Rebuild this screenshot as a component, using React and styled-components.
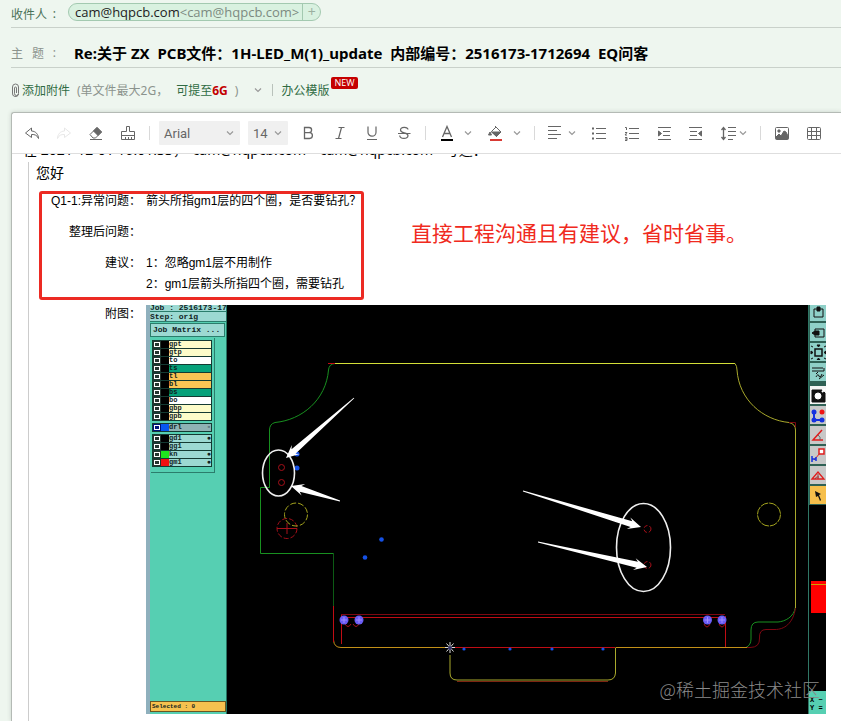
import React, { useState } from 'react';
import styled, { createGlobalStyle } from 'styled-components';

const GlobalStyle = createGlobalStyle`
    * {
        box-sizing: border-box;
    }
    body {
        margin: 0;
        background: #eef6ef;
        font-family: "Noto Sans", "Noto Sans CJK SC", sans-serif;
        font-size: 12px;
        color: #000;
        overflow: hidden;
    }
    button {
        font: inherit;
        color: inherit;
        border: 0;
        padding: 0;
        background: none;
        cursor: pointer;
    }
`;

const Page = styled.div`
    display: flex;
    flex-direction: column;
    height: 100vh;
    padding-left: 11px;
`;

const HeaderRow = styled.div`
    display: flex;
    align-items: center;
    flex-shrink: 0;
    height: ${props => props.$height}px;
    padding-top: ${props => props.$top || 0}px;
    border-bottom: 1px solid #c9d1ca;
    white-space: nowrap;
`;

const RowLabel = styled.label`
    display: flex;
    justify-content: space-between;
    width: 45px;
    margin-right: ${props => props.$space}px;
    color: ${props => props.$color};
`;

const Chip = styled.div`
    display: flex;
    align-items: center;
    height: 18px;
    margin-bottom: 3px;
    border: 1px solid #a3c9b0;
    border-radius: 9px;
    background: #d9f1e0;
    overflow: hidden;
    font-family: "Open Sans", sans-serif;
    font-size: 13px;
    line-height: 16px;
    padding-left: 6px;
    color: #222;
`;

const Address = styled.span`
    color: #7c8a80;
`;

const ChipAdd = styled.button`
    width: 18px;
    height: 18px;
    margin-left: 3px;
    border-left: 1px solid #a3c9b0;
    color: #9aaf9f;
    font-size: 14px;
    line-height: 14px;
`;

const SubjectInput = styled.input`
    flex: 1;
    border: 0;
    outline: 0;
    padding: 0;
    background: none;
    color: #000;
    font-family: "Noto Sans", "Noto Sans CJK SC", sans-serif;
    font-size: 15px;
    font-weight: bold;
    white-space: pre;
`;

const AttachRow = styled.div`
    display: flex;
    align-items: center;
    flex-shrink: 0;
    height: 44px;
    color: #8b938d;
    white-space: nowrap;
`;

const GreenLink = styled.a`
    color: #2f6b43;
    text-decoration: none;
    margin-left: ${props => props.$space || 0}px;
`;

const Hint = styled.span`
    margin: 0 8px 0 7px;
`;

const Limit = styled.b`
    color: #c30000;
`;

const MoreButton = styled.button`
    display: flex;
    margin-left: 8px;
`;

const Bar = styled.span`
    width: 1px;
    height: 12px;
    margin-left: 10px;
    background: #b9c2bb;
`;

const NewBadge = styled.span`
    align-self: flex-start;
    margin: 9px 0 0 2px;
    padding: 0 3px;
    border-radius: 2px;
    background: #c50000;
    color: #fff;
    font-family: "Open Sans", sans-serif;
    font-size: 9px;
    line-height: 12px;
`;

const Editor = styled.main`
    flex: 1;
    display: flex;
    flex-direction: column;
    min-height: 0;
    border: 1px solid #b4bab5;
    border-right: 0;
    border-bottom: 0;
    border-radius: 3px 0 0 0;
    background: #fff;
    box-shadow: 0 0 4px #c8d0c9;
`;

const Toolbar = styled.div`
    display: flex;
    align-items: center;
    flex-shrink: 0;
    height: 41px;
    padding-left: 4px;
    border-bottom: 1px solid #dedede;
    color: #666;
`;

const ToolButton = styled.button`
    display: flex;
    align-items: center;
    justify-content: center;
    gap: ${props => props.$gap || 0}px;
    flex-shrink: 0;
    height: 32px;
    padding: 0 8px;
    opacity: ${props => (props.disabled ? 0.15 : 1)};
`;

const Separator = styled.span`
    flex-shrink: 0;
    width: 1px;
    height: 14px;
    margin: 0 ${props => props.$right || 5}px 0 5px;
    background: #d9d9d9;
`;

const SelectBox = styled.div`
    display: grid;
    grid-template-columns: 1fr 14px;
    align-items: center;
    flex-shrink: 0;
    width: ${props => props.$width}px;
    height: 24px;
    margin-right: ${props => props.$right}px;
    background: #f0f0f0;
    border-radius: 1px;

    select {
        grid-area: 1 / 1 / 2 / 3;
        width: 100%;
        height: 24px;
        padding: 0 0 0 5px;
        border: 0;
        background: none;
        appearance: none;
        color: #666;
        font-family: Roboto, sans-serif;
        font-size: 13px;
    }

    svg {
        grid-area: 1 / 2;
        pointer-events: none;
    }
`;

const MailBody = styled.div`
    flex: 1;
    display: flex;
    flex-direction: column;
    min-height: 0;
    overflow: hidden;
`;

const QuoteIntro = styled.div`
    display: flex;
    align-items: flex-end;
    flex-shrink: 0;
    height: 8px;
    padding: 0 0 3px 11px;
    overflow: hidden;
    font-size: 14px;
    line-height: 18px;
    white-space: pre;
`;

const Quote = styled.blockquote`
    flex: 1;
    margin: 0 0 0 16px;
    border-left: 1px solid #ccc;
    font-family: "Liberation Sans", "Noto Sans CJK SC", sans-serif;
`;

const Greeting = styled.p`
    margin: 0;
    padding-left: 7px;
    font-size: 14px;
    line-height: 22px;
`;

const ReplyRow = styled.div`
    display: flex;
    align-items: flex-start;
    margin: 7px 0 0 10px;
`;

const Questions = styled.dl`
    display: grid;
    grid-template-columns: 99px 1fr;
    grid-template-rows: 31px 31px 21px 20px;
    column-gap: 5px;
    flex-shrink: 0;
    width: 325px;
    margin: 0;
    border: 3px solid #ec2a23;
    border-radius: 3px;
    line-height: 14px;

    dt {
        text-align: right;
        white-space: nowrap;
    }

    dd {
        margin: 0;
        grid-column: 2;
        white-space: nowrap;
    }
`;

const Remark = styled.p`
    margin: 27px 0 0 47px;
    color: #f02a20;
    font-size: 21px;
    line-height: 32px;
    white-space: nowrap;
`;

const FigureRow = styled.div`
    display: grid;
    grid-template-columns: 112px 1fr;
    column-gap: 5px;
    margin: 5px 15px 0 0;
    line-height: 18px;
    text-align: right;
`;

const Screen = styled.figure`
    position: relative;
    display: grid;
    grid-template-columns: 81px 1fr 18px;
    height: 409px;
    margin: 0;
    background: #000;
    overflow: hidden;
    text-align: left;
`;

const SidePanel = styled.div`
    display: flex;
    flex-direction: column;
    min-height: 0;
    border-left: 4px solid #8fb0bd;
    border-right: 1px solid #267361;
    background: #56cfb2;
    font-family: "Liberation Mono", monospace;
    font-weight: bold;
    color: #10231f;
`;

const PanelLine = styled.div`
    flex-shrink: 0;
    height: ${props => props.$height}px;
    border-bottom: 1px solid #2b7d6c;
    background: #9cd9d2;
    overflow: hidden;
    font-size: 8px;
    line-height: ${props => props.$line}px;
    white-space: pre;
`;

const MatrixButton = styled.button`
    flex-shrink: 0;
    height: 14px;
    margin: 1px 1px 0 0;
    padding-left: 2px;
    border: 1px solid #2b7d6c;
    background: #9cd9d2;
    font-size: 8px;
    line-height: 12px;
    text-align: left;
    white-space: pre;
`;

const LayerFrame = styled.div`
    margin: 1px 11px 0 1px;
    padding: 2px 2px 3px 1px;
    border: solid #2b7d6c;
    border-width: 0 1px 1px 0;
`;

const LayerGroup = styled.ul`
    margin: 0 0 2px;
    padding: 0;
    list-style: none;
    border: 1px solid #143a32;
    border-bottom-width: 0;
`;

const Layer = styled.li`
    display: grid;
    grid-template-columns: 8px 8px 1fr auto;
    height: 8px;
    border-bottom: 1px solid #143a32;
    background: ${props => props.$color};
    font-size: 7px;
    line-height: 6px;
    overflow: hidden;

    input {
        appearance: none;
        width: 8px;
        height: 7px;
        margin: 0;
        border: 1px solid ${props => props.$frame || '#25352f'};
        background: ${props => props.$frame || '#25352f'};
        box-shadow: inset 0 0 0 1px #fff;
    }
`;

const Swatch = styled.span`
    background: ${props => props.$color};
`;

const Selected = styled.div`
    height: 11px;
    margin: auto 0 2px;
    padding-left: 1px;
    border: 1px solid #6b5620;
    background: #f6c14f;
    font-size: 6px;
    line-height: 9px;
    white-space: pre;
`;

const Board = styled.svg`
    display: block;
    width: 100%;
    height: 409px;
`;

const ToolStrip = styled.div`
    display: flex;
    flex-direction: column;
    height: 409px;
    border-left: 1px solid #2f7665;
`;

const ToolGroup = styled.div`
    flex-shrink: 0;
    height: ${props => props.$height}px;
    display: flex;
    flex-direction: column;
    justify-content: flex-end;
    background: #2f6155;
    overflow: hidden;
`;

const CadTool = styled.button`
    flex-shrink: 0;
    height: 18px;
    margin: 1px 0 1px 1px;
    background: ${props => props.$color};

    svg {
        display: block;
    }
`;

const Zoomed = styled.div`
    height: 32px;
    margin: 76px 0 0 2px;
    padding-top: 3px;
    background: #f00;

    &::before {
        content: "";
        display: block;
        height: 1px;
        background: #d0a000;
    }
`;

const Coords = styled.div`
    margin-top: auto;
    height: 23px;
    background: #56cfb2;
    font-family: "Liberation Mono", monospace;
    font-size: 7px;
    font-weight: bold;
    line-height: 8px;
    padding: 5px 0 0 1px;
    white-space: pre;
`;

const Watermark = styled.figcaption`
    position: absolute;
    right: 6px;
    bottom: 13px;
    color: #8a8a8a;
    font-family: "Noto Sans CJK SC", sans-serif;
    font-size: 18px;
    font-weight: 300;
    line-height: 24px;
    white-space: nowrap;
`;

const layers = [
    { name: 'gpt', color: '#fdfcc9' },
    { name: 'gtp', color: '#fdfcc9' },
    { name: 'to', color: '#fff' },
    { name: 'ts', color: '#06a17a' },
    { name: 'tl', color: '#fac454' },
    { name: 'bl', color: '#fac454' },
    { name: 'bs', color: '#06a17a' },
    { name: 'bo', color: '#fff' },
    { name: 'gbp', color: '#fdfcc9' },
    { name: 'gpb', color: '#fdfcc9' },
];

const drills = [{ name: 'drl', color: '#8fb2b4', swatch: '#0757f0', frame: '#00147a', mark: '▫' }];

const extras = [
    { name: 'gd1', color: '#9cd9d2', mark: '●' },
    { name: 'gg1', color: '#9cd9d2' },
    { name: 'kn', color: '#9cd9d2', swatch: '#1ee81e', mark: '●' },
    { name: 'gm1', color: '#9cd9d2', swatch: '#f31010', mark: '●' },
];

function Icon({ children, size = 16, ...rest }) {
    return (
        <svg width={size} height={size} viewBox={`0 0 ${size} ${size}`} fill="none" stroke="currentColor" {...rest}>
            {children}
        </svg>
    );
}

function Chevron() {
    return <Icon size={8}><path d="M1 2.500 4 5.500l3-3" stroke="#999" strokeWidth="1.200" /></Icon>;
}

function LayerList({ items }) {
    return (
        <LayerGroup>
            {items.map(item => (
                <Layer key={item.name} $color={item.color} $frame={item.frame}>
                    <input type="checkbox" aria-label={item.name} />
                    <Swatch $color={item.swatch || '#000'} />
                    <span>{item.name}</span>
                    <span>{item.mark}</span>
                </Layer>
            ))}
        </LayerGroup>
    );
}

// Tapered arrow: thin at the tail, widening up to the head
function Arrow({ from, to, width = 3 }) {
    const length = Math.hypot(to[0] - from[0], to[1] - from[1]);
    const ux = (to[0] - from[0]) / length;
    const uy = (to[1] - from[1]) / length;
    const at = (along, side) => `${from[0] + ux * along - uy * side},${from[1] + uy * along + ux * side}`;
    const points = [
        at(0, 0.4), at(length - 10, width), at(length - 13, 6), at(length, 0),
        at(length - 13, -6), at(length - 10, -width), at(0, -0.4),
    ];
    return <polygon points={points.join(' ')} fill="#fff" />;
}

function BoardDrawing() {
    return (
        <Board viewBox="227 305 581 409" fill="none" role="img" aria-label="PCB">
            <g stroke="#189020">
                <path d="M335 363.5Q329 364 328.500 370C326 400 302 420 275 422.500Q269.500 424 269.500 430V487.500H260.500V553.500H333.500" />
                <path d="M333.500 553V606" stroke="#0c5b14" />
                <path d="M795.500 607C794 617 785 621.500 778 622H758Q751 622 751 630V639Q751 645 746 647.500" />
            </g>
            <g stroke="#a9a92c">
                <path d="M335 363.500H735" stroke="#d4df38" />
                <path d="M735 363.500Q737 366 737 370C739 400 763 420 789 422.500Q795.500 424 795.500 430V608" />
                <path d="M333.500 640Q334 647.500 341 647.500H450M615.500 647.500H747" stroke="#c39018" />
                <path d="M450 655V673Q450 680 457 680H608Q615 680 615.500 673V648" />
            </g>
            <g stroke="#c00d14">
                <path d="M328 363.500H335M333.500 606V642M450 647.500H615M341.500 617.500H725M341.500 614V644M725.500 616V647" />
                <path d="M341 614.500H725M795.500 608C793 624 784 629.500 775 629.500H766Q759 629.500 759.500 638Q760 647.500 750 647.500H747M789 422.500H795.500V427" stroke="#7d0812" />
                <path d="M457 681.500H608" stroke="#7d2512" />
            </g>
            <g stroke="#a6101a">
                <circle cx="281.500" cy="467.500" r="3" />
                <circle cx="281.500" cy="482.500" r="3" />
                <circle cx="647.500" cy="529" r="3.500" strokeDasharray="4 2" />
                <circle cx="647.500" cy="565" r="3.500" strokeDasharray="4 2" />
                <circle cx="287" cy="528.500" r="10" strokeDasharray="5 2" />
                <path d="M277 528.500H297M287 523V534M345 624q3 5 6 0M353 624q3 5 6 0M704 624q3 6 6 0M719 624q3 6 6 0" />
            </g>
            <g stroke="#a4a41e">
                <circle cx="296" cy="514.500" r="11.500" strokeDasharray="6 2" />
                <circle cx="769" cy="514.500" r="11.500" strokeDasharray="8 1" />
            </g>
            <g fill="#1551e6">
                <circle cx="297" cy="454" r="2.500" />
                <circle cx="297" cy="468" r="2.500" />
                <circle cx="381.500" cy="539.500" r="2.300" />
                <circle cx="365" cy="557.500" r="2.300" />
                {[464, 510, 552, 603].map(x => <circle key={x} cx={x} cy="649" r="1.600" />)}
            </g>
            {[344, 359, 707.5, 722].map(x => (
                <g key={x}>
                    <circle cx={x} cy="620" r="4.500" fill="#6a5cf5" />
                    <path d={`M${x - 3} 620h6M${x} 617v6`} stroke="#a08cff" />
                </g>
            ))}
            <path d="M445 647.500h10M450 642v11M446.500 643.500l7 8M453.500 643.500l-7 8" stroke="#ddd" />
            <circle cx="450" cy="648" r="2" fill="#35356a" />
            <g stroke="#eee" strokeWidth="1.600">
                <ellipse cx="278.500" cy="473" rx="16" ry="23" />
                <ellipse cx="643.500" cy="547.500" rx="27" ry="44" />
            </g>
            <Arrow from={[354, 398]} to={[286, 458]} />
            <Arrow from={[340, 501]} to={[291, 486]} />
            <Arrow from={[523, 491]} to={[641, 527]} />
            <Arrow from={[538, 542]} to={[647, 567]} />
        </Board>
    );
}

const teal = '#8fd0c8';
const grey = '#c8c8c8';

const viewTools = [
    { name: 'Paste view', color: teal, art: <><path d="M4 5h9v8H4z" /><path d="M7 7V3h3v4z" fill="#111" /></> },
    { name: 'Previous view', color: teal, art: <><path d="M5 5h9v8H5z" /><path d="M2 9l3-2h4v4H5z" fill="#111" /></> },
    { name: 'Fit view', color: teal, art: <><path d="M5 5h7v7H5z" strokeWidth="1.500" /><path d="M7 1h3l-1.500 2zM7 16h3l-1.500-2zM1 7v3l2-1.500zM16 7v3l-2-1.500zM1 2l2 1M16 2l-2 1M1 15l2-1M16 15l-2-1" fill="#111" /></> },
    { name: 'Setup', color: teal, art: <path d="M2 4h11M2 7h12V4M8 8l-2 2M6 13q2-4 3-1t3-2M9 15l5-4" /> },
];

const editTools = [
    { name: 'Area', color: '#f5f5f5', art: <><path d="M2 3h10l3 3v9H2z" fill="#111" /><circle cx="8" cy="9" r="3" fill="#fff" stroke="#fff" /><path d="M12 5l3-3" stroke="#fff" strokeWidth="2" /></> },
    { name: 'Nets', color: grey, art: <><path d="M4 5v8h8" stroke="#1430e0" strokeWidth="2" /><g fill="#1430e0" stroke="none"><circle cx="4" cy="5" r="2.500" /><circle cx="4" cy="13" r="2.500" /><circle cx="12" cy="13" r="2.500" /></g><circle cx="12" cy="5" r="2.500" fill="#f01414" stroke="none" /></> },
    { name: 'Angle', color: grey, art: <><path d="M12 3L3 13h10" stroke="#e01c1c" strokeWidth="1.500" /><path d="M8 8q3 2 2 5" stroke="#666" /></> },
    { name: 'Distance', color: grey, art: <><path d="M4 13L11 5" stroke="#e01c1c" /><path d="M9 2h5v5H9z" stroke="#e01c1c" fill="#fff" strokeWidth="1.500" /><path d="M2 9v6M6 10v4M2 12h4" stroke="#1430e0" strokeWidth="1.500" /></> },
    { name: 'Triangle', color: grey, art: <><path d="M2 12l6-7 6 7z" stroke="#e01c1c" strokeWidth="1.300" /><path d="M8 7v5M5 12q1-3 4-2" stroke="#a33" /></> },
    { name: 'Select', color: '#f6bf4c', art: <path d="M5 4l6 3-2 1 2 5-1 1-2-5-2 1z" fill="#111" stroke="none" /> },
];

function CadTools({ tools }) {
    return tools.map(tool => (
        <CadTool key={tool.name} $color={tool.color} aria-label={tool.name}>
            <Icon size={16} stroke="#111">{tool.art}</Icon>
        </CadTool>
    ));
}

function EditorToolbar() {
    return (
        <Toolbar>
            <ToolButton aria-label="撤销">
                <Icon><path d="M7.500 3 1.500 8l6 4.500v-3C11 9.300 13 10.300 14.500 13.500 14.300 9.500 12 6.200 7.500 6z" /></Icon>
            </ToolButton>
            <ToolButton aria-label="重做" disabled>
                <Icon><path d="M8.500 3l6 5-6 4.500v-3C5 9.300 3 10.300 1.500 13.500 1.700 9.500 4 6.200 8.500 6z" /></Icon>
            </ToolButton>
            <ToolButton aria-label="清除格式">
                <Icon><path d="M2 9.500 9 2.500l4.500 4.500-6 6H5zM2 14.500h12" /><path d="M9 2.500 13.500 7 10 10.500 5.500 6z" fill="currentColor" /></Icon>
            </ToolButton>
            <ToolButton aria-label="格式刷">
                <Icon><path d="M6.500 1.500h3v5h5v8h-13v-8h5zM1.500 10.500h13M5.500 12v2M8.500 12v2M11.500 12v2" /></Icon>
            </ToolButton>
            <Separator $right={9} />
            <SelectBox $width={81} $right={8}>
                <select aria-label="字体" defaultValue="Arial"><option>Arial</option></select>
                <Chevron />
            </SelectBox>
            <SelectBox $width={40} $right={4}>
                <select aria-label="字号" defaultValue="14"><option>14</option></select>
                <Chevron />
            </SelectBox>
            <ToolButton aria-label="加粗">
                <Icon><path d="M4.500 2.500H9a2.500 2.500 0 0 1 0 5.200H4.500zM4.500 7.700h5a2.900 2.900 0 0 1 0 5.800h-5z" strokeWidth="1.300" /></Icon>
            </ToolButton>
            <ToolButton aria-label="斜体">
                <Icon><path d="M6.500 2.500h6M3.500 13.500h6M9.500 2.500l-3 11" strokeWidth="1.200" /></Icon>
            </ToolButton>
            <ToolButton aria-label="下划线">
                <Icon><path d="M4 1.500v5.700a4 4 0 0 0 8 0V1.500M3 14.500h10" strokeWidth="1.200" /></Icon>
            </ToolButton>
            <ToolButton aria-label="删除线">
                <Icon><path d="M12 4.500C11.500 1.500 4.500 1.500 4.500 5c0 4 7.500 1.800 7.500 5.800 0 3.600-8 3.600-8.300-.3M2 8.500h12.500" strokeWidth="1.200" /></Icon>
            </ToolButton>
            <Separator />
            <ToolButton aria-label="文字颜色" $gap={9}>
                <Icon><path d="M3.500 12 8 1.500 12.500 12M5 8.500h6" strokeWidth="1.300" /><path d="M2 15h12" stroke="#000" strokeWidth="2" /></Icon>
                <Chevron />
            </ToolButton>
            <ToolButton aria-label="背景颜色" $gap={9}>
                <Icon><path d="M3.500 6.500 8 2l5 5-4.500 4.500zM7 1l2 2" /><path d="M3.500 7h9.500l-4.500 4.500zM2 7l-1.500 3h3z" fill="currentColor" /><path d="M2 15h12" stroke="#d83a34" strokeWidth="2" /></Icon>
                <Chevron />
            </ToolButton>
            <Separator $right={4} />
            <ToolButton aria-label="对齐" $gap={5}>
                <Icon><path d="M1 1.500h13M1 5.500h9M1 9.500h13M1 13.500h9" /></Icon>
                <Chevron />
            </ToolButton>
            <ToolButton aria-label="无序列表">
                <Icon><path d="M4 3.500h10M4 8.500h10M4 13.500h10" /><path d="M0 3.500h2M0 8.500h2M0 13.500h2" strokeWidth="2" /></Icon>
            </ToolButton>
            <ToolButton aria-label="有序列表">
                <Icon><path d="M5 3.500h10M5 8.500h10M5 13.500h10M1 2.500h1.500V5M1 7.500h2L1 10h2M1 12.500h2v3H1M1 14h2" /></Icon>
            </ToolButton>
            <ToolButton aria-label="增加缩进">
                <Icon><path d="M2 2.500h13M7 6.500h7M7 10.500h7M2 14.500h13" /><path d="M2.500 6v5L5.500 8.500z" fill="currentColor" /></Icon>
            </ToolButton>
            <ToolButton aria-label="减少缩进">
                <Icon><path d="M1 2.500h13M2 6.500h7M2 10.500h7M1 14.500h13" /><path d="M13.500 6v5L10.500 8.500z" fill="currentColor" /></Icon>
            </ToolButton>
            <ToolButton aria-label="行距" $gap={3}>
                <Icon><path d="M3.500 3v11M1.500 5l2-2.500 2 2.500M1.500 12l2 2.500 2-2.500" strokeWidth="1.300" /><path d="M8 2.500h8M8 6.500h8M8 10.500h8M8 14.500h5" /></Icon>
                <Chevron />
            </ToolButton>
            <Separator />
            <ToolButton aria-label="图片">
                <Icon><rect x="1.500" y="2.500" width="13" height="12" rx="1" /><circle cx="5" cy="6" r="1.200" fill="currentColor" /><path d="M2 14v-2l3-3 2 2 3-5 2 1 2 4v3z" fill="currentColor" /></Icon>
            </ToolButton>
            <ToolButton aria-label="表格">
                <Icon><rect x="1.500" y="2.500" width="13" height="12" rx="1" /><path d="M1.500 6.500h13M1.500 10.500h13M5.500 2.500v12M10.500 2.500v12" /></Icon>
            </ToolButton>
        </Toolbar>
    );
}

export default function App() {
    const [subject, setSubject] = useState('Re:关于 ZX  PCB文件：1H-LED_M(1)_update  内部编号：2516173-1712694  EQ问客');

    return (
        <Page>
            <GlobalStyle />
            <HeaderRow $height={28}>
                <RowLabel as="span" $space={12} $color="#4a7156"><span>收件人</span><span>:</span></RowLabel>
                <Chip>
                    cam@hqpcb.com<Address>&lt;cam@hqpcb.com&gt;</Address>
                    <ChipAdd aria-label="添加收件人">+</ChipAdd>
                </Chip>
            </HeaderRow>
            <HeaderRow $height={40} $top={10}>
                <RowLabel htmlFor="subject" $space={18} $color="#8b938d"><span>主</span><span>题</span><span>:</span></RowLabel>
                <SubjectInput id="subject" value={subject} onChange={e => setSubject(e.target.value)} />
            </HeaderRow>
            <AttachRow>
                <svg width="11" height="14" viewBox="0 0 11 14" fill="none" stroke="#777">
                    <path d="M1.500 10V4a3 3 0 0 1 6 0v6.500a2 2 0 0 1-4 0V5a1 1 0 0 1 2 0v5M1.500 10a3 3 0 0 0 6 1" />
                </svg>
                <GreenLink href="#attach">添加附件</GreenLink>
                <Hint>(单文件最大2G，</Hint>
                <GreenLink href="#large">可提至<Limit>6G</Limit></GreenLink>
                <Hint>)</Hint>
                <MoreButton aria-label="更多"><Chevron /></MoreButton>
                <Bar />
                <GreenLink href="#template" $space={8}>办公模版</GreenLink>
                <NewBadge>NEW</NewBadge>
            </AttachRow>
            <Editor>
                <EditorToolbar />
                <MailBody>
                    <QuoteIntro>在 2021-12-01 16:01:33，"cam@hqpcb.com"&lt;cam@hqpcb.com&gt; 写道：</QuoteIntro>
                    <Quote>
                        <Greeting>您好</Greeting>
                        <ReplyRow>
                            <Questions>
                                <dt>Q1-1:异常问题：</dt>
                                <dd>箭头所指gm1层的四个圈，是否要钻孔？</dd>
                                <dt>整理后问题：</dt>
                                <dd />
                                <dt>建议：</dt>
                                <dd>1：忽略gm1层不用制作</dd>
                                <dd>2：gm1层箭头所指四个圈，需要钻孔</dd>
                            </Questions>
                            <Remark>直接工程沟通且有建议，省时省事。</Remark>
                        </ReplyRow>
                        <FigureRow>
                            <span>附图：</span>
                            <Screen>
                                <SidePanel>
                                    <PanelLine $height={7} $line={6}>Job : 2516173-17</PanelLine>
                                    <PanelLine $height={10} $line={9}>Step: orig</PanelLine>
                                    <MatrixButton>Job Matrix ...</MatrixButton>
                                    <LayerFrame>
                                        <LayerList items={layers} />
                                        <LayerList items={drills} />
                                        <LayerList items={extras} />
                                    </LayerFrame>
                                    <Selected>Selected : 0</Selected>
                                </SidePanel>
                                <BoardDrawing />
                                <ToolStrip>
                                    <ToolGroup $height={77}><CadTools tools={viewTools} /></ToolGroup>
                                    <ToolGroup $height={123}><CadTools tools={editTools} /></ToolGroup>
                                    <Zoomed />
                                    <Coords>{'X ~\nY ='}</Coords>
                                </ToolStrip>
                                <Watermark>@稀土掘金技术社区</Watermark>
                            </Screen>
                        </FigureRow>
                    </Quote>
                </MailBody>
            </Editor>
        </Page>
    );
}
